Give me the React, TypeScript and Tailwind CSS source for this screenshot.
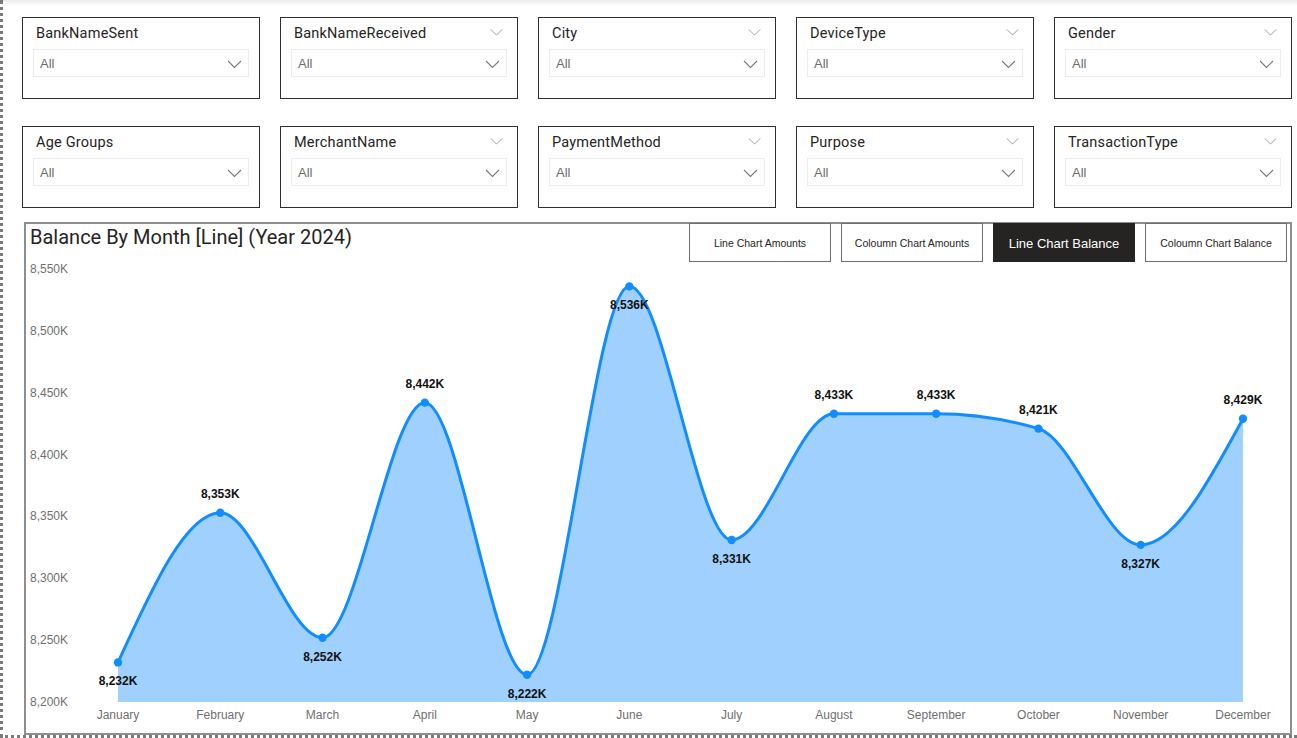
import React from 'react';

const row1 = ['BankNameSent', 'BankNameReceived', 'City', 'DeviceType', 'Gender'];
const row2 = ['Age Groups', 'MerchantName', 'PaymentMethod', 'Purpose', 'TransactionType'];

const months = [
  'January', 'February', 'March', 'April', 'May', 'June',
  'July', 'August', 'September', 'October', 'November', 'December',
];
const values = [8232, 8353, 8252, 8442, 8222, 8536, 8331, 8433, 8433, 8421, 8327, 8429];
// true = label sits above the point
const labelAbove = [false, true, false, true, false, false, false, true, true, true, false, true];

const BASE = 703;
const xOf = (i: number) => 118 + i * 102.27;
const yOf = (v: number) => BASE - (v - 8200) * 1.237;

const sign = (n: number) => (n < 0 ? -1 : 1);

// monotone cubic interpolation, same idea as d3 curveMonotoneX
const buildPath = (pts: [number, number][]) => {
  const n = pts.length;
  const t: number[] = new Array(n).fill(0);
  for (let i = 1; i < n - 1; i++) {
    const [x0, y0] = pts[i - 1];
    const [x1, y1] = pts[i];
    const [x2, y2] = pts[i + 1];
    const h0 = x1 - x0;
    const h1 = x2 - x1;
    const s0 = (y1 - y0) / h0;
    const s1 = (y2 - y1) / h1;
    const p = (s0 * h1 + s1 * h0) / (h0 + h1);
    t[i] = (sign(s0) + sign(s1)) * Math.min(Math.abs(s0), Math.abs(s1), 0.5 * Math.abs(p)) || 0;
  }
  {
    const h = pts[1][0] - pts[0][0];
    t[0] = (3 * (pts[1][1] - pts[0][1]) / h - t[1]) / 2;
    const h2 = pts[n - 1][0] - pts[n - 2][0];
    t[n - 1] = (3 * (pts[n - 1][1] - pts[n - 2][1]) / h2 - t[n - 2]) / 2;
  }
  let d = `M${pts[0][0]},${pts[0][1]}`;
  for (let i = 0; i < n - 1; i++) {
    const [x0, y0] = pts[i];
    const [x1, y1] = pts[i + 1];
    const dx = (x1 - x0) / 3;
    d += ` C${x0 + dx},${y0 + dx * t[i]} ${x1 - dx},${y1 - dx * t[i + 1]} ${x1},${y1}`;
  }
  return d;
};

const fmt = (v: number) => `${v.toLocaleString('en-US')}K`;

const Chevron = ({ className }: { className?: string }) => (
  <svg width="15" height="9" viewBox="0 0 15 9" className={className}>
    <path d="M1 1 L7.5 7.5 L14 1" fill="none" stroke="currentColor" strokeWidth="1.1" />
  </svg>
);

const Slicer = ({ label, showHeaderChevron }: { label: string; showHeaderChevron: boolean }) => (
  <div className="w-[238px] h-[82px] border border-[#2f2f2f] bg-white flex flex-col">
    <div className="flex items-center justify-between h-[31px] pl-[13px] pr-[14px] pt-[1px]">
      <span
        className="text-[14.5px] text-[#252423] tracking-[0.2px]"
        style={{ fontFamily: 'Roboto, "Noto Sans", sans-serif' }}
      >
        {label}
      </span>
      {showHeaderChevron && <Chevron className="text-[#9a9a9a] -mt-[4px] w-[13px]" />}
    </div>
    <div className="mx-[10px] h-[28px] border border-[#ececec] flex items-center justify-between pl-[6px] pr-[6px] pt-[2px]">
      <span className="text-[13px] text-[#6b6b6b]" style={{ fontFamily: '"Liberation Sans", Arial, sans-serif' }}>
        All
      </span>
      <Chevron className="text-[#7a7a7a]" />
    </div>
  </div>
);

const ToggleButton = ({ label, active }: { label: string; active?: boolean }) => (
  <div
    className={`w-[142px] h-[39px] flex items-center justify-center border pt-[3px] ${
      active ? 'bg-[#252423] border-[#252423] text-white text-[13px]' : 'bg-white border-[#6f6f6f] text-[#252423] text-[10.5px]'
    }`}
    style={{ fontFamily: '"Liberation Sans", Arial, sans-serif' }}
  >
    {label}
  </div>
);

const BalanceChart = () => {
  const pts: [number, number][] = values.map((v, i) => [xOf(i), yOf(v)]);
  const line = buildPath(pts);
  const area = `${line} L${xOf(11)},${BASE} L${xOf(0)},${BASE} Z`;
  const ticks = [8550, 8500, 8450, 8400, 8350, 8300, 8250, 8200];
  const font = '"Liberation Sans", Arial, sans-serif';

  return (
    <svg width="1264" height="472" viewBox="26 262 1264 472" className="block">
      {ticks.map((tk) => (
        <text key={tk} x={30} y={yOf(tk) + 4} fontSize="12" fill="#6f6f6f" fontFamily={font}>
          {tk.toLocaleString('en-US')}K
        </text>
      ))}
      <path d={area} fill="#A0D1FE" />
      <path d={line} fill="none" stroke="#118DFF" strokeWidth="3" strokeLinejoin="round" />
      {pts.map(([x, y], i) => (
        <circle key={i} cx={x} cy={y} r="4.2" fill="#118DFF" />
      ))}
      {pts.map(([x, y], i) => (
        <text
          key={`l${i}`}
          x={x}
          y={labelAbove[i] ? y - 15 : y + 23}
          textAnchor="middle"
          fontSize="12"
          fontWeight="700"
          fill="#111"
          fontFamily={font}
        >
          {fmt(values[i])}
        </text>
      ))}
      {months.map((m, i) => (
        <text key={m} x={xOf(i)} y={720} textAnchor="middle" fontSize="12" fill="#6f6f6f" fontFamily={font}>
          {m}
        </text>
      ))}
    </svg>
  );
};

export default function App() {
  return (
    <div className="w-[1297px] h-[738px] bg-white border-l-[3px] border-b-[3px] border-dotted border-[#7a7a7a] overflow-hidden flex flex-col">
      <div className="h-[6px] bg-gradient-to-b from-[#ebebeb] to-white shrink-0" />

      <div className="mt-[11px] ml-[19px] flex gap-[20px]">
        {row1.map((l, i) => (
          <Slicer key={l} label={l} showHeaderChevron={i !== 0} />
        ))}
      </div>

      <div className="mt-[27px] ml-[19px] flex gap-[20px]">
        {row2.map((l, i) => (
          <Slicer key={l} label={l} showHeaderChevron={i !== 0} />
        ))}
      </div>

      <div className="mt-[14px] ml-[21px] w-[1268px] h-[513px] border-2 border-[#8e8e8e] flex flex-col shrink-0">
        <div className="h-[37px] flex items-start justify-between">
          <h1
            className="pl-[4px] pt-[1px] text-[20px] leading-[24px] text-[#252423]"
            style={{ fontFamily: 'Roboto, "Noto Sans", sans-serif' }}
          >
            Balance By Month [Line] (Year 2024)
          </h1>
          <div className="flex gap-[10px] -mt-[1px] pr-[3px]">
            <ToggleButton label="Line Chart Amounts" />
            <ToggleButton label="Coloumn Chart Amounts" />
            <ToggleButton label="Line Chart Balance" active />
            <ToggleButton label="Coloumn Chart Balance" />
          </div>
        </div>
        <BalanceChart />
      </div>
    </div>
  );
}
